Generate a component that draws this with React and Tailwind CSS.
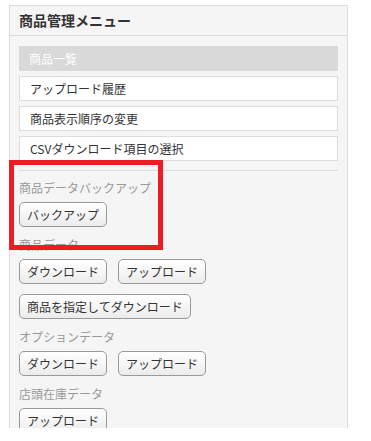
const menuItems = [
  { label: "商品一覧", active: true },
  { label: "アップロード履歴" },
  { label: "商品表示順序の変更" },
  { label: "CSVダウンロード項目の選択" },
];

const sections = [
  { title: "商品データバックアップ", rows: [["バックアップ"]] },
  { title: "商品データ", rows: [["ダウンロード", "アップロード"], ["商品を指定してダウンロード"]] },
  { title: "オプションデータ", rows: [["ダウンロード", "アップロード"]] },
  { title: "店頭在庫データ", rows: [["アップロード"]] },
];

const Btn = ({ children }) => (
  <button className="h-[25px] px-[7px] rounded-[5px] border border-[#999] bg-gradient-to-b from-white to-[#ececec] text-[12px] leading-none text-[#333]">
    {children}
  </button>
);

export default function App() {
  return (
    <div
      className="relative w-[371px] h-[441px] bg-white overflow-hidden"
      style={{ fontFamily: '"Noto Sans CJK JP", "Noto Sans", sans-serif' }}
    >
      <div className="ml-[9px] mt-[5px] w-[339px] h-[423px] overflow-hidden border border-b-0 border-[#dcdcdc] bg-[#f5f5f5]">
        <div className="h-[30px] flex items-center px-[9px] border-b border-[#dcdcdc]">
          <h2 className="text-[14px] font-bold text-[#333]">商品管理メニュー</h2>
        </div>
        <div className="px-[9px] pt-[10px]">
          <ul className="flex flex-col gap-[5px]">
            {menuItems.map((m) => (
              <li
                key={m.label}
                className={`h-[25px] flex items-center px-[10px] text-[12px] ${
                  m.active ? "bg-[#d9d9d9] text-white" : "bg-white border border-[#dcdcdc] text-[#333] px-[9px]"
                }`}
              >
                {m.label}
              </li>
            ))}
          </ul>
          <div className="mt-[9px] border-t border-[#dcdcdc]" />
          {sections.map((s, i) => (
            <div key={s.title} className={i === 0 ? "mt-[7px]" : "mt-[8px]"}>
              <p className="h-[20px] flex items-center text-[12px] text-[#999]">{s.title}</p>
              <div className="mt-[4px] flex flex-col gap-[10px]">
                {s.rows.map((row, j) => (
                  <div key={j} className="flex gap-[11px]">
                    {row.map((b) => (
                      <Btn key={b}>{b}</Btn>
                    ))}
                  </div>
                ))}
              </div>
            </div>
          ))}
        </div>
      </div>
      <div className="absolute left-[9px] top-[160px] w-[154px] h-[90px] border-[5px] border-[#ed1c24]" />
    </div>
  );
}
